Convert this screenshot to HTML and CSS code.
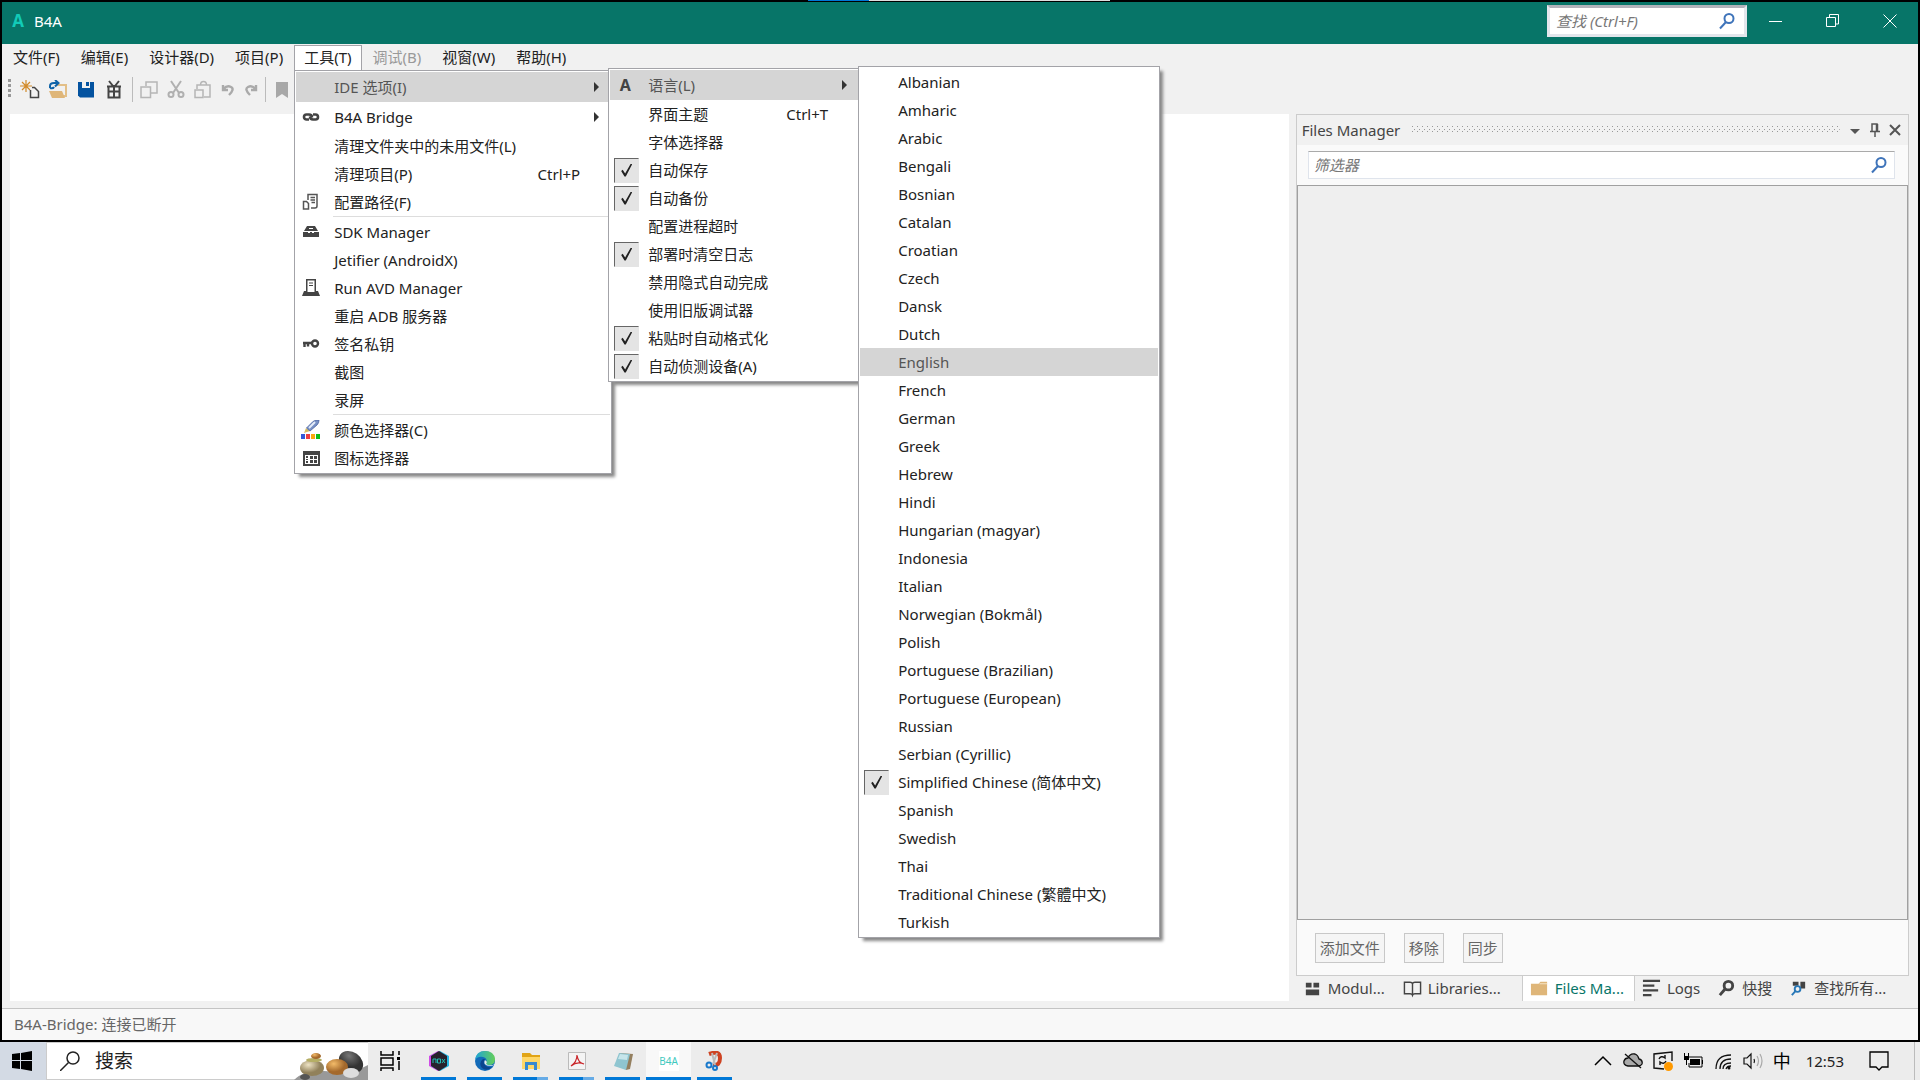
FILE: index.html
```html
<!DOCTYPE html>
<html lang="zh-CN">
<head>
<meta charset="utf-8">
<title>B4A</title>
<link rel="stylesheet" href="styles.css">
</head>
<body>
<div class="load-strip"><i></i></div>
<div class="window">
  <header class="titlebar">
    <span class="logo">A</span>
    <h1>B4A</h1>
    <label class="title-search">
      <input type="text" placeholder="查找 (Ctrl+F)" aria-label="查找">
      <svg class="lens" viewBox="0 0 18 18"><circle cx="11" cy="6.500" r="4.500"/><path d="M8 10L2 16.500"/></svg>
    </label>
    <button class="win-btn" aria-label="最小化"><svg viewBox="0 0 14 14"><path d="M0 7.500h13"/></svg></button>
    <button class="win-btn" aria-label="还原"><svg viewBox="0 0 14 14"><path d="M.5 3.500h9v9h-9zM3.500 3V.5h9v9.500H10"/></svg></button>
    <button class="win-btn" aria-label="关闭"><svg viewBox="0 0 14 14"><path d="M.5.5l13 13M13.500.5l-13 13"/></svg></button>
  </header>

  <nav class="menubar">
    <button>文件(F)</button>
    <button>编辑(E)</button>
    <button>设计器(D)</button>
    <button>项目(P)</button>
    <div class="open-menu">
      <button class="active">工具(T)</button>
      <div class="menu tools-menu">
        <div class="branch">
          <button class="row tall hot"><span></span><span>IDE 选项(I)</span><i class="arrow"></i></button>
          <div class="menu ide-menu">
            <div class="branch">
              <button class="row tall hot"><b class="letter">A</b><span>语言(L)</span><i class="arrow"></i></button>
              <div class="menu lang-menu">
                <label class="row"><input type="radio" name="lang"><span>Albanian</span></label>
                <label class="row"><input type="radio" name="lang"><span>Amharic</span></label>
                <label class="row"><input type="radio" name="lang"><span>Arabic</span></label>
                <label class="row"><input type="radio" name="lang"><span>Bengali</span></label>
                <label class="row"><input type="radio" name="lang"><span>Bosnian</span></label>
                <label class="row"><input type="radio" name="lang"><span>Catalan</span></label>
                <label class="row"><input type="radio" name="lang"><span>Croatian</span></label>
                <label class="row"><input type="radio" name="lang"><span>Czech</span></label>
                <label class="row"><input type="radio" name="lang"><span>Dansk</span></label>
                <label class="row"><input type="radio" name="lang"><span>Dutch</span></label>
                <label class="row hot"><input type="radio" name="lang"><span>English</span></label>
                <label class="row"><input type="radio" name="lang"><span>French</span></label>
                <label class="row"><input type="radio" name="lang"><span>German</span></label>
                <label class="row"><input type="radio" name="lang"><span>Greek</span></label>
                <label class="row"><input type="radio" name="lang"><span>Hebrew</span></label>
                <label class="row"><input type="radio" name="lang"><span>Hindi</span></label>
                <label class="row"><input type="radio" name="lang"><span>Hungarian (magyar)</span></label>
                <label class="row"><input type="radio" name="lang"><span>Indonesia</span></label>
                <label class="row"><input type="radio" name="lang"><span>Italian</span></label>
                <label class="row"><input type="radio" name="lang"><span>Norwegian (Bokmål)</span></label>
                <label class="row"><input type="radio" name="lang"><span>Polish</span></label>
                <label class="row"><input type="radio" name="lang"><span>Portuguese (Brazilian)</span></label>
                <label class="row"><input type="radio" name="lang"><span>Portuguese (European)</span></label>
                <label class="row"><input type="radio" name="lang"><span>Russian</span></label>
                <label class="row"><input type="radio" name="lang"><span>Serbian (Cyrillic)</span></label>
                <label class="row"><input type="radio" name="lang" checked><span>Simplified Chinese (简体中文)</span></label>
                <label class="row"><input type="radio" name="lang"><span>Spanish</span></label>
                <label class="row"><input type="radio" name="lang"><span>Swedish</span></label>
                <label class="row"><input type="radio" name="lang"><span>Thai</span></label>
                <label class="row"><input type="radio" name="lang"><span>Traditional Chinese (繁體中文)</span></label>
                <label class="row"><input type="radio" name="lang"><span>Turkish</span></label>
              </div>
            </div>
            <button class="row"><span></span><span>界面主题</span><kbd>Ctrl+T</kbd></button>
            <button class="row"><span></span><span>字体选择器</span></button>
            <label class="row"><input type="checkbox" checked><span>自动保存</span></label>
            <label class="row"><input type="checkbox" checked><span>自动备份</span></label>
            <button class="row"><span></span><span>配置进程超时</span></button>
            <label class="row"><input type="checkbox" checked><span>部署时清空日志</span></label>
            <label class="row"><input type="checkbox"><span>禁用隐式自动完成</span></label>
            <label class="row"><input type="checkbox"><span>使用旧版调试器</span></label>
            <label class="row"><input type="checkbox" checked><span>粘贴时自动格式化</span></label>
            <label class="row"><input type="checkbox" checked><span>自动侦测设备(A)</span></label>
          </div>
        </div>
        <button class="row tall"><svg viewBox="0 0 20 20" fill="none" stroke="#444" stroke-width="2.600"><path d="M8 12.500H5.500a2.500 2.500 0 0 1 0-5H8q3 0 3 3M12 7.500h2.500a2.500 2.500 0 0 1 0 5H12q-3 0-3-3"/></svg><span>B4A Bridge</span><i class="arrow"></i></button>
        <button class="row"><span></span><span>清理文件夹中的未用文件(L)</span></button>
        <button class="row"><span></span><span>清理项目(P)</span><kbd>Ctrl+P</kbd></button>
        <button class="row"><svg viewBox="0 0 20 20" fill="none" stroke="#555" stroke-width="1.500"><path d="M7 8V2.500h9V14q0 2-2 2h-4M9.500 5.500h4.500M9.500 8h4.500M10.500 10.500H14M2.500 9.500h3l2 2v5.500h-5z"/></svg><span>配置路径(F)</span></button>
        <hr>
        <button class="row"><svg viewBox="0 0 20 20" fill="#444"><path d="M6 4h8l3 5H3zM2 10h5v1h2v-1h2v1h2v-1h5v5H2z"/><path d="M8 6h4v1H8z" fill="#fff"/></svg><span>SDK Manager</span></button>
        <button class="row"><span></span><span>Jetifier (AndroidX)</span></button>
        <button class="row"><svg viewBox="0 0 20 20"><path d="M1 18l2-5h14l2 5z" fill="#444"/><path d="M5.750 1.750h8.500v13h-8.500z" fill="#fff" stroke="#444" stroke-width="1.500"/><path d="M8 5h4M8 7.500h4" stroke="#444"/></svg><span>Run AVD Manager</span></button>
        <button class="row"><span></span><span>重启 ADB 服务器</span></button>
        <button class="row"><svg viewBox="0 0 20 20" fill="none" stroke="#444" stroke-width="2.400"><circle cx="14" cy="9.500" r="3"/><path d="M11 9H2M3.500 9v4M7 9v3.500"/></svg><span>签名私钥</span></button>
        <button class="row"><span></span><span>截图</span></button>
        <button class="row"><span></span><span>录屏</span></button>
        <hr>
        <button class="row"><svg viewBox="0 0 20 20"><path d="M3 13l2-5 4 3z" fill="#d9bd62"/><path d="M5.500 8L12 1.500q3-2 6-1.500 0 3-2 5L9 11z" fill="#7790c5" stroke="#4a62a0" stroke-width=".8"/><path d="M8 8l6-6" stroke="#e4ebf8" stroke-width="2"/><path d="M0 14h4v5H0z" fill="#3558d8"/><path d="M5 14h4v5H5z" fill="#ee3d42"/><path d="M10 14h4v5h-4z" fill="#fba90d"/><path d="M15 14h4v5h-4z" fill="#10bd18"/></svg><span>颜色选择器(C)</span></button>
        <button class="row"><svg viewBox="0 0 20 20"><path d="M2 3h17v15H2z" fill="#444"/><path d="M4 7h13v9H4z" fill="#fff"/><path d="M5 8h2v2H5zM5 11h2v1H5zM5 13h2v2H5zM9 8h3v3H9zM13 8h3v3h-3zM9 12h3v3H9zM13 12h3v3h-3z" fill="#444"/></svg><span>图标选择器</span></button>
      </div>
    </div>
    <button disabled>调试(B)</button>
    <button>视窗(W)</button>
    <button>帮助(H)</button>
  </nav>

  <div class="toolbar">
    <i class="grip"></i>
    <div class="tools file-tools">
      <button aria-label="新建"><svg viewBox="0 0 20 20" fill="none"><path d="M6 0v12M0 6h12M2 2l8 8M10 2l-8 8" stroke="#d28a28" stroke-width="1.200"/><path d="M10.500 10v7.500h8v-6l-4-4H12" stroke="#444" stroke-width="1.500"/></svg></button>
      <button aria-label="打开"><svg viewBox="0 0 20 20"><path d="M8 4h11v13H4v-2h13V6H8z" fill="#e3bf87"/><path d="M1 11h13l3 7H4z" fill="#dfb679"/><path d="M2 8V6q0-3 4-3h3M7 0l3.500 3L7 6.500M2 8q3 1 4-1" fill="none" stroke="#1064a8" stroke-width="2"/></svg></button>
      <button aria-label="保存"><svg viewBox="0 0 20 20"><path d="M2 2h16v15.500H4l-2-2z" fill="#0453a0"/><path d="M6 2h8v6H6z" fill="#f1f1f1"/><path d="M10 2h3v4h-3z" fill="#0453a0"/></svg></button>
      <button aria-label="打包"><svg viewBox="0 0 20 20" fill="none" stroke="#444" stroke-width="2"><path d="M3 6.500h14M4.500 11.500h11v6h-11zM10 5v12M4.500 6v6M15.500 6v6M9 6L5 1M11 6l4-5"/></svg></button>
    </div>
    <i class="divider"></i>
    <div class="tools">
      <button aria-label="复制" disabled><svg viewBox="0 0 20 20" fill="none" stroke="#b5b5b5" stroke-width="1.500"><path d="M7 6V2h11v11h-6M2 7h9.500v10.500H2z"/></svg></button>
      <button aria-label="剪切" disabled><svg viewBox="0 0 20 20" fill="none" stroke="#b0b0b0" stroke-width="2"><path d="M5 1l8 12M15 1L7 13"/><circle cx="5" cy="14.500" r="2.500"/><circle cx="15" cy="14.500" r="2.500"/></svg></button>
      <button aria-label="粘贴" disabled><svg viewBox="0 0 20 20" fill="none" stroke="#b5b5b5" stroke-width="1.500"><path d="M4 9V5h13v12h-6M7.500 5q0-3.500 3-3.500t3 3.500M2 10h8v7.500H2z"/></svg></button>
      <button class="small" aria-label="撤销" disabled><svg viewBox="2 0 16 20" fill="none" stroke="#aaa" stroke-width="2.400"><path d="M5 5v5h5M5.500 9Q9 5 13 7t-2 8"/></svg></button>
      <button class="small" aria-label="重做" disabled><svg viewBox="2 0 16 20" fill="none" stroke="#aaa" stroke-width="2.400"><path d="M15 5v5h-5M14.500 9Q11 5 7 7t2 8"/></svg></button>
    </div>
    <i class="divider"></i>
    <button aria-label="书签" disabled><svg viewBox="0 0 20 20" fill="#a8a8a8"><path d="M4 2h12v16l-6-4-6 4z"/></svg></button>
  </div>

  <main class="workspace">
    <section class="editor"></section>
    <aside class="dock">
      <section class="panel">
        <header class="panel-head">
          <h2>Files Manager</h2>
          <svg class="dots" aria-hidden="true"><defs><pattern id="dots" width="5" height="5" patternUnits="userSpaceOnUse"><path d="M0 0h1v1H0zM2 3h1v1H2z" fill="#999"/></pattern></defs><rect width="100%" height="100%" fill="url(#dots)"/></svg>
          <button aria-label="菜单"><svg viewBox="0 0 14 16"><path d="M2 7h10l-5 5z" fill="#555"/></svg></button>
          <button aria-label="固定"><svg viewBox="0 0 14 16" fill="none" stroke="#555" stroke-width="1.500"><path d="M4 9V2h5v7M2 9.500h10M7 10v5"/><path d="M9 2v7" stroke-width="2.500"/></svg></button>
          <button aria-label="关闭面板"><svg viewBox="0 0 14 16" fill="none" stroke="#555" stroke-width="2"><path d="M2 3l10 10M12 3L2 13"/></svg></button>
        </header>
        <label class="filter">
          <input type="text" placeholder="筛选器" aria-label="筛选器">
          <svg class="lens" viewBox="0 0 18 18"><circle cx="11" cy="6.500" r="4.500"/><path d="M8 10L2 16.500"/></svg>
        </label>
        <div class="files"></div>
        <div class="actions">
          <button disabled>添加文件</button><button disabled>移除</button><button disabled>同步</button>
        </div>
      </section>
      <nav class="tabs">
        <button class="modules"><svg viewBox="0 0 20 20" fill="#444"><path d="M3 4h6v5H3zM11 4h6v5h-6zM3 11h14v6H3z"/></svg>Modul...</button>
        <button class="libraries"><svg viewBox="0 0 20 20" fill="none" stroke="#444" stroke-width="1.500"><path d="M1.500 3.500h6q2 0 2.500 1.500.5-1.500 2.500-1.500h6v12h-6q-2 0-2.500 1.500-.5-1.500-2.500-1.500h-6zM10 4v12"/></svg>Libraries...</button>
        <button class="current"><svg viewBox="0 0 20 20"><path d="M1 5h8l2-2h7v14H1z" fill="#dfb679"/><path d="M10 5h8" stroke="#f7e6c8"/></svg>Files Ma...</button>
        <button><svg viewBox="0 0 20 20" stroke="#444" stroke-width="2.400"><path d="M1 2h18M1 7h12M1 12h16M1 17h9"/></svg>Logs</button>
        <button><svg viewBox="0 0 20 20" fill="none" stroke="#444" stroke-width="3"><circle cx="12" cy="7" r="4.500"/><path d="M8.500 10.500L3 17"/></svg>快搜</button>
        <button><svg viewBox="0 0 20 20"><path d="M4 3h6v4H4zM12 3h5v7h-5z" fill="#444"/><g fill="none" stroke="#2878b8" stroke-width="2"><circle cx="9" cy="10.500" r="3"/><path d="M7 12.500l-4 4.500"/></g></svg>查找所有...</button>
      </nav>
    </aside>
  </main>
  <footer class="status">B4A-Bridge: 连接已断开</footer>
</div>

<footer class="taskbar">
  <button class="start" aria-label="开始"><svg viewBox="0 0 20 20"><path d="M0 3l8-1v7H0zM9 2l11-2v9H9zM0 10h8v8l-8-1zM9 10h11v10L9 18z"/></svg></button>
  <label class="task-search">
    <svg class="glass" viewBox="0 0 20 20" fill="none" stroke="#222" stroke-width="1.500"><circle cx="13" cy="7" r="6"/><path d="M8.500 11.500L0 20"/></svg>
    <input type="text" placeholder="搜索" aria-label="搜索">
    <svg class="stones" viewBox="0 0 74 38"><defs><radialGradient id="s1" cx=".35" cy=".3"><stop offset="0" stop-color="#eee3c4"/><stop offset="1" stop-color="#91815b"/></radialGradient><radialGradient id="s2" cx=".35" cy=".3"><stop offset="0" stop-color="#f3bb69"/><stop offset="1" stop-color="#a4692c"/></radialGradient><radialGradient id="s3" cx=".3" cy=".3"><stop offset="0" stop-color="#777"/><stop offset="1" stop-color="#333"/></radialGradient></defs><path d="M0 38q8-9 30-9l28 2 16-8v15z" fill="#999"/><ellipse cx="57" cy="20" rx="13" ry="10" fill="url(#s3)" transform="rotate(35 57 20)"/><ellipse cx="43" cy="25" rx="11" ry="8" fill="url(#s2)"/><ellipse cx="18" cy="26" rx="12" ry="8" fill="url(#s1)"/><ellipse cx="20" cy="18" rx="8" ry="2" fill="#b5ae65"/><ellipse cx="22" cy="14" rx="5" ry="3" fill="url(#s2)"/><ellipse cx="57" cy="31" rx="8" ry="5" fill="#ddd"/><ellipse cx="11" cy="35" rx="5" ry="3" fill="#555"/></svg>
  </label>
  <button class="view" aria-label="任务视图"><svg viewBox="0 0 20 20" fill="none" stroke="#000" stroke-width="1.500"><path d="M1 0v4h12V0M1 7h12v7H1zM1 20v-3h12v3M19 0v4M19 10v9"/><path d="M17 6h3v3h-3z" fill="#000" stroke="none"/></svg></button>
  <nav class="apps">
    <button aria-label="Nox"><svg viewBox="0 0 20 20"><path d="M9 0l9 5v10l-9 5-9-5V5z" fill="#d04ce8"/><path d="M11 0l9 5v10l-9 5-9-5V5z" fill="#26b7e4"/><path d="M10 0l8 5v10l-8 5-8-5V5z" fill="#28222d"/><path d="M4 12V8h3v4M8.500 8h3v4h-3zM13 8l3 4M16 8l-3 4" fill="none" stroke="#21bcb4"/></svg></button>
    <button aria-label="Edge"><svg viewBox="0 0 20 20"><defs><linearGradient id="e1"><stop offset="0" stop-color="#1fa3d8"/><stop offset="1" stop-color="#65cf58"/></linearGradient></defs><circle cx="10" cy="10" r="10" fill="#126ab8"/><path d="M0 9Q1 0 10 0q9 0 10 8 0 6-6 6-4 0-3-2 2-5-3-6Q3 5 0 9z" fill="url(#e1)"/><path d="M8 8q-5 4-1 9 5 4 10-1-3 1-6-1-4-3-1-7z" fill="#0c458e"/><path d="M10 9q-2 4 2 5.500 4 1 7-.5l1 1.500V13q-3 2-7 1-3-1-1-3z" fill="#ececec"/></svg></button>
    <button class="multi" aria-label="文件资源管理器"><svg viewBox="0 0 20 20"><path d="M1 2h8l2 2h8v14H1z" fill="#e1a416"/><path d="M1 6h18v12H1z" fill="#ffd768"/><path d="M4 19v-8h12v8h-3v-5H7v5z" fill="#3889d0"/></svg></button>
    <button class="multi" aria-label="Acrobat"><svg viewBox="0 0 20 20"><path d="M1.500 1.500h17v17h-17z" fill="#f4f4f4" stroke="#bbb"/><path d="M4 15q6-4 6-11 1 8 7 9-7-3-13 2z" fill="none" stroke="#c9262b" stroke-width="1.200"/></svg></button>
    <button aria-label="记事本"><svg viewBox="0 0 20 20"><path d="M6 2l14 1-3 15-4 1z" fill="#947f5f"/><path d="M6 2l11 1-4 16-12-4z" fill="#8fc5d0"/><path d="M7 3l8 1-1 5-9-1z" fill="#c6e5ea"/></svg></button>
    <button class="running" aria-label="B4A"><span class="b4a">B4A</span></button>
    <button aria-label="截图工具"><svg viewBox="0 0 20 20" fill="none"><path d="M4 3q11-4 11 4t-7 7" stroke="#ce4322" stroke-width="4"/><path d="M7 2l3 12M12 2L8 13" stroke="#bbb" stroke-width="2"/><g stroke="#1979cb" stroke-width="2"><circle cx="4" cy="14" r="2.500"/><circle cx="10" cy="17" r="2"/></g></svg></button>
  </nav>
  <div class="tray">
    <svg viewBox="0 0 20 20" fill="none" stroke="#000" stroke-width="1.500"><path d="M2 14l8-8 8 8"/></svg>
    <svg viewBox="0 0 20 20" fill="#aaa" stroke="#111" stroke-width="1.300"><path d="M5 15q-5-1-4-5 1-3 4-3 2-5 7-4 3 1 4 5 4 1 3 5-1 2-4 2z"/><path d="M2 3l16 14"/></svg>
    <svg viewBox="0 0 20 20" fill="none" stroke="#111" stroke-width="1.400"><path d="M11 18l-10-1V3l18-2v9M6 8q2-4 6-1V4M13 10q-2 4-6 1v3"/><circle cx="15.500" cy="15.500" r="4.500" fill="#f90" stroke="none"/></svg>
    <svg viewBox="0 0 20 20"><path d="M5 6h14v10H6v-4" fill="none" stroke="#000"/><path d="M7 8h10v6H7zM19 9h1v4h-1zM1 5h5v4H1zM1 2h1v3H1zM5 2h1v3H5zM3 9h1v5H3z"/></svg>
    <svg viewBox="0 0 20 20" fill="none" stroke="#111" stroke-width="1.300"><path d="M3 18Q3 4 18 4M7 18Q7 8 18 8M10 18q0-6 8-6M13 18q1-3 5-3"/><circle cx="16" cy="17" r="1.500" fill="#111" stroke="none"/></svg>
    <svg viewBox="0 0 20 20" fill="none" stroke="#111" stroke-width="1.200"><path d="M1 7h3l4-4v14l-4-4H1zM11 8q1 2 0 4"/><path d="M14 5q3 5 0 10M17 3q4 7 0 14" stroke="#aaa"/></svg>
    <span class="ime">中</span>
    <time>12:53</time>
    <svg class="notify" viewBox="0 0 20 20" fill="none" stroke="#000" stroke-width="1.300"><path d="M1 1h18v15h-6l-3 3-3-3H1z"/></svg>
  </div>
</footer>
</body>
</html>
```
FILE: styles.css
```css
* { box-sizing: border-box; }
body {
  margin: 0;
  height: 100vh;
  display: flex;
  flex-direction: column;
  overflow: hidden;
  font: 15px/20px "Noto Sans", "Noto Sans CJK SC", sans-serif;
  color: #222;
  background: #ececec;
}
button, input, kbd { font: inherit; color: inherit; }
button { background: none; border: 0; padding: 0; white-space: nowrap; }
h1, h2 { margin: 0; font-size: 15px; font-weight: 400; }
svg { display: block; flex: none; }
input { min-width: 0; border: 0; outline: 0; background: none; padding: 0; }
input::placeholder { color: #777; opacity: 1; }

.load-strip { position: absolute; top: 0; left: 42.1%; width: 15.7%; height: 1px; background: #ddd; }
.load-strip i { display: block; width: 20%; height: 1px; background: #0078d7; }

.window {
  flex: 1;
  min-height: 0;
  display: flex;
  flex-direction: column;
  border: 2px solid #000;
  background: #f1f1f1;
}

.titlebar { height: 42px; padding-bottom: 4px; display: flex; align-items: center; background: #077568; color: #fff; }
.logo { width: 32px; text-align: center; font: bold 17px/20px "Open Sans", sans-serif; color: #12cbb8; }
.title-search {
  margin: 0 0 0 auto;
  width: 200px;
  height: 32px;
  display: flex;
  align-items: center;
  padding: 0 8px 0 6px;
  background: #fff;
  border: 3px solid #e3e6ec;
  border-top-color: #b2b2ba;
}
.title-search input { flex: 1; font-style: italic; }
.lens { width: 18px; height: 18px; fill: none; stroke: #3f74ba; stroke-width: 2; }
.win-btn { width: 57px; height: 38px; display: grid; place-items: center; }
.win-btn svg { width: 14px; height: 14px; fill: none; stroke: #fff; }

.menubar { height: 27px; padding-left: 1px; display: flex; gap: 1px; }
.menubar > button, .open-menu > button { height: 27px; padding: 0 10px 2px; }
.menubar > button:disabled { color: #999; }
.open-menu { position: relative; }
.open-menu > .active { height: 26px; margin-top: 1px; background: #fff; border: 1px solid #a3a3a8; border-bottom: 0; padding: 0 9px 3px; }

.menu {
  position: absolute;
  z-index: 2;
  padding: 1px;
  background: #fff;
  border: 1px solid #a3a3a8;
  box-shadow: 4px 4px 3px -1px #888;
}
.tools-menu { top: 26px; left: 0; width: 318px; }
.ide-menu { top: -4px; left: 312px; width: 252px; }
.lang-menu { top: -4px; left: 248px; width: 302px; }
.branch { position: relative; }
.row {
  position: relative;
  width: 100%;
  height: 28px;
  display: grid;
  grid-template-columns: 38px 1fr auto;
  align-items: center;
  text-align: left;
  white-space: nowrap;
}
.tall { height: 30px; }
.hot { background: #d5d5d5; color: #555; }
.row svg { width: 20px; height: 20px; margin-left: 5px; }
.letter { width: 30px; text-align: center; font-size: 16px; color: #444; }
.row kbd { padding-right: 30px; }
.arrow { margin-right: 11px; border: 5px solid transparent; border-left-color: #333; border-right: 0; }
.menu hr { margin: 0 0 1px 37px; border: 0; border-top: 1px solid #ddd; }
.row input { appearance: none; width: 25px; height: 25px; margin: 0 0 0 4px; border: 1px solid transparent; display: grid; place-items: center; }
.row input:checked { background: #e4e4e4; border-top-color: #666; border-left-color: #666; }
.row input:checked::before {
  content: "";
  width: 11px;
  height: 13px;
  background: #222;
  clip-path: polygon(0 58%, 14% 48%, 36% 76%, 88% 0, 100% 6%, 42% 100%, 30% 100%);
}
.lang-menu .row { grid-template-columns: 38px 1fr; }

.toolbar { height: 43px; padding: 6px 0 0 6px; display: flex; gap: 6px; align-items: flex-start; }
.toolbar button, .toolbar svg { width: 20px; height: 20px; }
.toolbar button { margin-top: 3px; }
.toolbar .small, .toolbar .small svg { width: 16px; }
.tools { display: flex; gap: 7px; }
.file-tools { gap: 8px; margin: 0 2px 0 3px; }
.grip { width: 3px; height: 20px; margin-top: 2px; background: repeating-linear-gradient(#999 0 3px, transparent 3px 5px); }
.divider { width: 1px; height: 25px; background: #bbb; }

.workspace { flex: 1; min-height: 0; display: flex; padding: 0 9px 7px 8px; gap: 7px; }
.editor { flex: 1; background: #fff; }
.dock { width: 32.3%; display: flex; flex-direction: column; }
.panel { flex: 1; min-height: 0; display: flex; flex-direction: column; border: 1px solid #ccc; background: #fafafa; }
.panel-head { height: 30px; padding: 0 6px 0 5px; display: flex; align-items: center; gap: 6px; background: #f1f1f1; color: #444; }
.dots { flex: 1; width: 0; height: 8px; margin: 0 2px 0 6px; }
.panel-head button, .panel-head button svg { width: 14px; height: 16px; }
.filter { height: 28px; margin: 6px 13px 6px 11px; padding: 0 6px 0 5px; display: flex; align-items: center; background: #fff; border: 1px solid #dfe4ec; border-top-color: #aaa; }
.filter input { flex: 1; font-style: italic; }
.files { flex: 1; border: 1px solid #a0a0a0; background: #efefef; }
.actions { height: 55px; padding: 0 18px; display: flex; align-items: center; gap: 19px; }
.actions button { height: 30px; padding: 0 4px; border: 1px solid #c8c8c8; background: #f5f5f5; color: #666; }
.tabs { height: 25px; display: flex; color: #444; }
.tabs button { height: 25px; display: flex; align-items: center; gap: 6px; padding: 0 10px 1px 7px; }
.tabs svg { width: 19px; height: 19px; }
.tabs .libraries { margin: 0 11px 0 1px; }
.tabs .current { background: #fff; border-left: 1px solid #ccc; border-right: 1px solid #ccc; color: #087568; }

.status { height: 32px; padding: 0 12px; line-height: 31px; border-top: 1px solid #c4c4c4; background: #f8f8f8; color: #666; }

.taskbar { height: 38px; display: flex; background: #ececec; }
.start { width: 46px; display: grid; place-items: center; padding-right: 2px; background: #d3dae4; }
.start svg { width: 20px; height: 20px; }
.task-search { width: 322px; display: flex; align-items: center; padding-left: 13px; gap: 15px; background: #fff; border: 1px solid #ccc; border-right: 0; }
.glass { width: 20px; height: 20px; }
.task-search input { flex: 1; font-size: 19px; }
.task-search input::placeholder { color: #222; }
.stones { width: 74px; height: 38px; }
.view { margin: 0 16px 0 12px; }
.view svg { width: 20px; height: 20px; }
.apps { display: flex; gap: 1px; }
.apps button { width: 45px; display: grid; place-items: center; position: relative; }
.apps button::after { content: ""; position: absolute; left: 5px; right: 5px; bottom: 0; height: 3px; background: #0078d7; }
.apps svg { width: 20px; height: 20px; }
.apps .multi::after { background: linear-gradient(90deg, #0078d7 70%, #66abe6 70%); }
.apps .running { background: #f8f8f8; }
.apps .running::after { left: 0; right: 0; }
.b4a { width: 20px; background: #fff; font-size: 10px; text-align: center; color: #3fc9c0; }
.tray { margin-left: auto; margin-right: 5px; padding-right: 25px; border-right: 1px solid #bbb; display: flex; align-items: center; gap: 10px; }
.tray svg { width: 20px; height: 20px; }
.ime { font-size: 18px; color: #000; }
.tray time { margin-left: 5px; }
.tray .notify { margin-left: 15px; }
```
